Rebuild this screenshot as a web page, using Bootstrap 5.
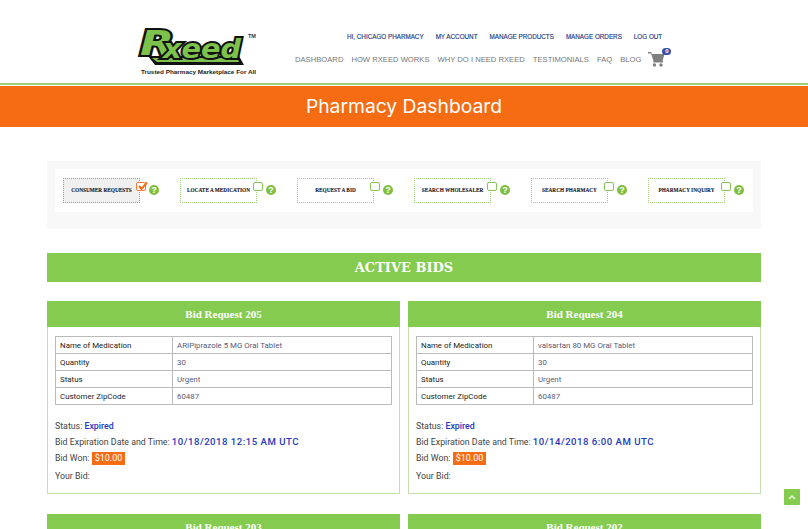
<!DOCTYPE html>
<html lang="en">
<head>
<meta charset="utf-8">
<title>Pharmacy Dashboard</title>
<link href="https://cdn.jsdelivr.net/npm/bootstrap@5.3.0/dist/css/bootstrap.min.css" rel="stylesheet">
<style>
html,body{height:529px;overflow:hidden;background:#fff}
body{font-family:Roboto,"Liberation Sans",sans-serif;font-size:8.6px;color:#444;line-height:1.2}
.hdr{height:83px;padding-left:135px}
.logo-svg{width:125px;height:56px;margin-top:23px;display:block;flex:none;overflow:visible}
.hdr-right{margin-left:35px;width:372px}
.toplinks{padding-top:32px;padding-left:52px;gap:12px;height:54px}
.toplinks a{font:6.3px/9px "Liberation Sans",sans-serif;color:#1d3a80;text-decoration:none;text-transform:uppercase;white-space:nowrap;-webkit-text-stroke:.15px #1d3a80}
.mainlinks{gap:8px;position:relative}
.mainlinks a{font:7.65px/11px "Liberation Sans",sans-serif;color:#777;text-decoration:none;text-transform:uppercase;white-space:nowrap}
.cartwrap{position:relative;width:18px;height:16px;margin-left:-1px;margin-top:-3px}
.cartcount{position:absolute;right:-5px;top:-3px;width:9px;height:7px;border-radius:4px;background:#3a50a8;color:#fff;font:bold 6px/7px "Liberation Sans",sans-serif;text-align:center}
.rule{height:2px;background:#9fd078}
.banner{margin:1px 0 0;height:41px;background:#f56c13;color:#fff;font:400 19.3px/41px Inter,"Open Sans",sans-serif;text-align:center}
.wrap{margin:34px 47px 0;width:714px}
.panel{background:#f8f8f8;height:68px;padding:8px}
.panel-in{background:#fff;height:43px;padding:9px 8px 0;gap:21px}
.svc{width:96px;flex:none}
.tile{width:77px;height:25px;border:1px dotted #9fd078;font:bold 5.3px/23px "Liberation Serif",serif;color:#1a1a2a;text-align:center;text-transform:uppercase;white-space:nowrap;flex:none;-webkit-text-stroke:.1px #1a1a2a}
.tile.on{border-color:#f57a5a;background:#f0f0f0}
.chk{width:10px;height:9px;margin-left:-4px;margin-top:4px;border:1px solid #86c45a;border-radius:2px;background:#fff;flex:none;position:relative}
.chk.on{border-color:#f57a3a}
.chk svg{position:absolute;left:0;top:-2px;width:11px;height:10px}
.qmark{width:10px;height:10px;margin-left:3px;margin-top:7px;border-radius:50%;background:#7fbf3f;color:#fff;font:bold 9px/10px "Liberation Sans",sans-serif;text-align:center;flex:none}
.sectionbar{margin-top:24px;height:29px;background:#84cb4f;color:#fff;font:bold 13px/29px "DejaVu Serif","Liberation Serif",serif;text-align:center}
.bids{margin-top:19px}
.bidcard{border:1px solid #c5dfb0;height:193px;margin-bottom:20px;background:#fff}
.bidhead{background:#84cb4f;color:#fff;height:26px;margin:-1px -1px 0;font:bold 11px/26px "Liberation Serif",serif;text-align:center}
.bidbody{padding:9px 7px 0}
.bidtbl{width:337px;border-collapse:collapse;table-layout:fixed;margin:0}
.bidtbl td{border:1px solid #bbb;height:17px;padding:0 4px;font:400 7.9px/15px Roboto,sans-serif;color:#5a5a78;white-space:nowrap}
.bidtbl td:first-child{width:117px;color:#222}
.facts{margin-top:14px;font:8.8px/15px Roboto,sans-serif;color:#444}
.facts p{margin:0 0 .6px}
.facts p.dateline{margin-bottom:1.6px}
.facts b{font-weight:500;color:#2438c0}
.facts .when{font-size:9.6px;letter-spacing:.5px;line-height:1}
.won{background:#f56c13;color:#fff;padding:1px 3px;display:inline-block;line-height:11px;font-size:9px}
.youbid{margin-top:3px!important}
.totop{position:fixed;left:784px;top:489px;width:16px;height:16px;background:#84cb4f;border:0;padding:0;border-radius:1px;display:flex;align-items:center;justify-content:center}
</style>
</head>
<body>
<header class="hdr d-flex">
  <svg class="logo-svg" viewBox="0 0 125 56" aria-label="Rxeed logo">
    <path d="M13 33 L104 33 L109 42 L20 42 Z" fill="#111"/>
    <path d="M17 35 L102 35 L104 39 L22 39 Z" fill="#7cc24c"/>
    <g font-family="DejaVu Sans" font-weight="700" font-style="italic" fill="#7cc24c" stroke="#111" paint-order="stroke">
      <text x="5" y="32" font-size="34" stroke-width="4" textLength="34" lengthAdjust="spacingAndGlyphs">R</text>
      <text x="28" y="35" font-size="27" stroke-width="4" textLength="78" lengthAdjust="spacingAndGlyphs">xeed</text>
    </g>
    <text x="113" y="15" font-family="Liberation Sans" font-weight="700" font-size="5.500" fill="#333">TM</text>
    <text x="6" y="51" font-family="Liberation Sans" font-weight="700" font-size="6" fill="#222" textLength="115" lengthAdjust="spacingAndGlyphs">Trusted Pharmacy Marketplace For All</text>
  </svg>
  <div class="hdr-right">
    <nav class="toplinks d-flex">
      <a href="#">Hi, Chicago Pharmacy</a><a href="#">My Account</a><a href="#">Manage Products</a><a href="#">Manage Orders</a><a href="#">Log Out</a>
    </nav>
    <nav class="mainlinks d-flex">
      <a href="#">Dashboard</a><a href="#">How Rxeed Works</a><a href="#">Why Do I Need Rxeed</a><a href="#">Testimonials</a><a href="#">FAQ</a><a href="#">Blog</a>
      <div class="cartwrap">
        <svg width="17" height="16" viewBox="0 0 17 16"><path d="M0 1h3l1 2h12.500l-2 7H5.500L3 2.500H0z" fill="#808080"/><path d="M5.500 10h9.500v1.500H5z" fill="#808080"/><circle cx="6.500" cy="14" r="1.700" fill="#808080"/><circle cx="13" cy="14" r="1.700" fill="#808080"/></svg>
        <span class="cartcount">0</span>
      </div>
    </nav>
  </div>
</header>
<div class="rule"></div>
<h1 class="banner">Pharmacy Dashboard</h1>
<main class="wrap">
  <section class="panel">
    <div class="panel-in d-flex">
      <div class="svc d-flex"><div class="tile on">Consumer Requests</div><span class="chk on"><svg viewBox="0 0 11 10"><path d="M2 5l2.500 3L10 1.500" fill="none" stroke="#f56c13" stroke-width="2"/></svg></span><span class="qmark">?</span></div>
      <div class="svc d-flex"><div class="tile">Locate a Medication</div><span class="chk"></span><span class="qmark">?</span></div>
      <div class="svc d-flex"><div class="tile">Request a Bid</div><span class="chk"></span><span class="qmark">?</span></div>
      <div class="svc d-flex"><div class="tile">Search Wholesaler</div><span class="chk"></span><span class="qmark">?</span></div>
      <div class="svc d-flex"><div class="tile">Search Pharmacy</div><span class="chk"></span><span class="qmark">?</span></div>
      <div class="svc d-flex"><div class="tile">Pharmacy Inquiry</div><span class="chk"></span><span class="qmark">?</span></div>
    </div>
  </section>
  <h2 class="sectionbar">ACTIVE BIDS</h2>
  <div class="bids row gx-2 gy-0">
    <div class="col-6">
      <article class="bidcard">
        <h3 class="bidhead">Bid Request 205</h3>
        <div class="bidbody">
          <table class="bidtbl"><tr><td>Name of Medication</td><td>ARIPiprazole 5 MG Oral Tablet</td></tr><tr><td>Quantity</td><td>30</td></tr><tr><td>Status</td><td>Urgent</td></tr><tr><td>Customer ZipCode</td><td>60487</td></tr></table>
          <div class="facts">
            <p>Status: <b>Expired</b></p>
            <p class="dateline">Bid Expiration Date and Time: <b class="when">10/18/2018 12:15 AM UTC</b></p>
            <p>Bid Won: <span class="won">$10.00</span></p>
            <p class="youbid">Your Bid:</p>
          </div>
        </div>
      </article>
    </div>
    <div class="col-6">
      <article class="bidcard">
        <h3 class="bidhead">Bid Request 204</h3>
        <div class="bidbody">
          <table class="bidtbl"><tr><td>Name of Medication</td><td>valsartan 80 MG Oral Tablet</td></tr><tr><td>Quantity</td><td>30</td></tr><tr><td>Status</td><td>Urgent</td></tr><tr><td>Customer ZipCode</td><td>60487</td></tr></table>
          <div class="facts">
            <p>Status: <b>Expired</b></p>
            <p class="dateline">Bid Expiration Date and Time: <b class="when">10/14/2018 6:00 AM UTC</b></p>
            <p>Bid Won: <span class="won">$10.00</span></p>
            <p class="youbid">Your Bid:</p>
          </div>
        </div>
      </article>
    </div>
    <div class="col-6"><article class="bidcard"><h3 class="bidhead">Bid Request 203</h3></article></div>
    <div class="col-6"><article class="bidcard"><h3 class="bidhead">Bid Request 202</h3></article></div>
  </div>
</main>
<button class="totop" aria-label="Back to top"><svg width="8" height="5" viewBox="0 0 8 5"><path d="M1 4l3-3 3 3" fill="none" stroke="#e6f4da" stroke-width="1.500"/></svg></button>
<script src="https://cdn.jsdelivr.net/npm/bootstrap@5.3.0/dist/js/bootstrap.bundle.min.js"></script>
</body>
</html>
